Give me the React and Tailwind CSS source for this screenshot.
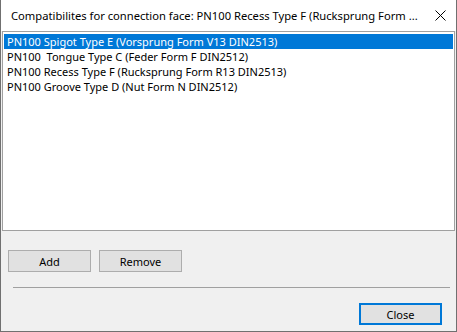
export default function App() {
  const items = [
    "PN100 Spigot Type E (Vorsprung Form V13 DIN2513)",
    "PN100  Tongue Type C (Feder Form F DIN2512)",
    "PN100 Recess Type F (Rucksprung Form R13 DIN2513)",
    "PN100 Groove Type D (Nut Form N DIN2512)",
  ];
  return (
    <div
      className="w-[457px] h-[332px] bg-[#f0f0f0] border-l border-r border-b border-[#707070] flex flex-col text-[11px] text-black overflow-hidden"
      style={{ fontFamily: '"Noto Sans", sans-serif' }}
    >
      <div className="h-[31px] bg-white flex items-center pl-[10px] pr-[10px] shrink-0">
        <span className="flex-1 whitespace-pre leading-[15px] text-[11.2px]">
          Compatibilites for connection face: PN100 Recess Type F (Rucksprung Form ...
        </span>
        <svg width="11" height="11" viewBox="0 0 11 11">
          <path d="M0.5 0.5 L10.5 10.5 M10.5 0.5 L0.5 10.5" stroke="#000" strokeWidth="1" />
        </svg>
      </div>
      <div className="mx-[1px] h-[200px] shrink-0 bg-white border border-[#a0a0a0] pt-[2px] px-[1px]">
        {items.map((t, i) => (
          <div
            key={i}
            className={
              "h-[15px] pl-[3px] whitespace-pre leading-[15px] " +
              (i === 0 ? "bg-[#0078d7] text-white" : "")
            }
          >
            {t}
          </div>
        ))}
      </div>
      <div className="flex gap-[8px] pl-[7px] mt-[19px] shrink-0">
        <button className="w-[83px] h-[22px] bg-[#e1e1e1] border border-[#adadad] flex items-center justify-center leading-none">
          Add
        </button>
        <button className="w-[83px] h-[22px] bg-[#e1e1e1] border border-[#adadad] flex items-center justify-center leading-none">
          Remove
        </button>
      </div>
      <div className="ml-[12px] mr-[6px] mt-[15px] h-[1px] bg-[#a0a0a0] shrink-0" />
      <div className="flex justify-end pr-[14px] mt-[15px] shrink-0">
        <button className="w-[83px] h-[22px] bg-[#e1e1e1] border-2 border-[#0078d7] flex items-center justify-center leading-none">
          Close
        </button>
      </div>
    </div>
  );
}
